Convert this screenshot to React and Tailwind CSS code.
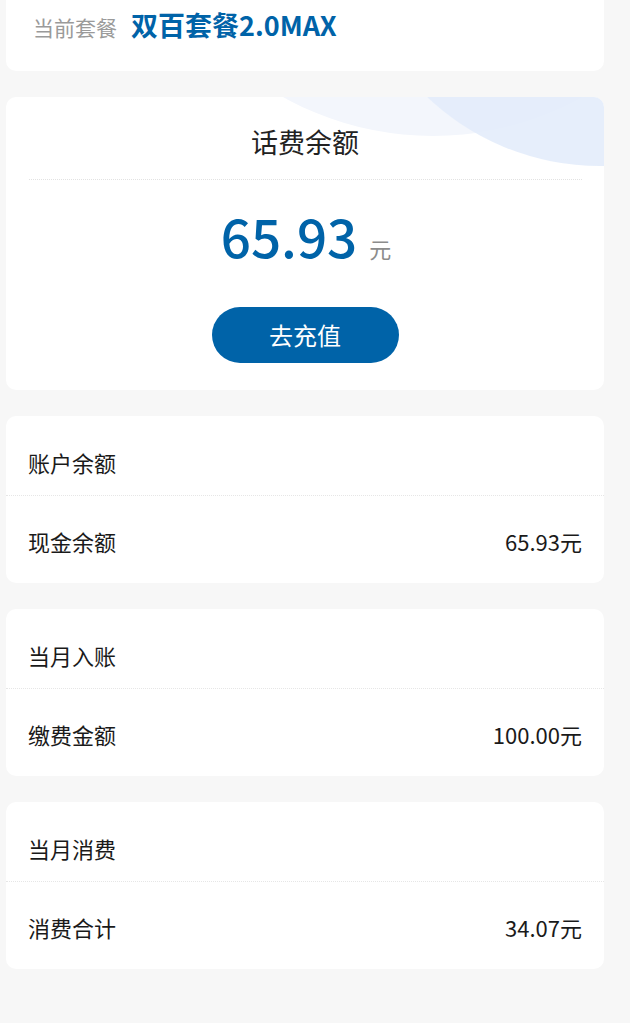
import React from "react";

const font = "font-['Noto_Sans_CJK_SC','Noto_Sans',sans-serif]";

const sections = [
  { title: "账户余额", label: "现金余额", value: "65.93元" },
  { title: "当月入账", label: "缴费金额", value: "100.00元" },
  { title: "当月消费", label: "消费合计", value: "34.07元" },
];

// One white block: section header, dotted rule, then label / amount row.
function InfoCard({ title, label, value }) {
  return (
    <div className="h-[167px] rounded-[10px] bg-white">
      <div className="h-[80px] border-b border-dotted border-[#e6e6e6] px-[22px] pt-[30px] text-[22px] leading-[32px] text-[#1a1a1a]">
        {title}
      </div>
      <div className="flex h-[87px] justify-between px-[22px] pt-[29px] text-[22px] leading-[32px] text-[#1a1a1a]">
        <span>{label}</span>
        <span>{value}</span>
      </div>
    </div>
  );
}

export default function App() {
  return (
    <div className={`${font} min-h-[1023px] bg-[#f7f7f7] pl-[6px] pr-[26px]`}>
      <div className="flex flex-col gap-[26px]">
        {/* current plan */}
        <div className="h-[71px] rounded-b-[10px] bg-white">
          <div className="flex h-[50px] items-center pl-[27px]">
            <div className="flex items-baseline gap-[14px]">
              <span className="text-[21px] text-[#9a9a9a]">当前套餐</span>
              <span className="text-[27px] font-bold text-[#0063a8]">双百套餐2.0MAX</span>
            </div>
          </div>
        </div>

        {/* phone balance */}
        <div className="relative h-[293px] overflow-hidden rounded-[10px] bg-white">
          <div className="pointer-events-none absolute left-[119px] top-[-577px] h-[616px] w-[616px] rounded-full bg-[#f3f6fc]" />
          <div className="pointer-events-none absolute left-[343px] top-[-433px] h-[502px] w-[502px] rounded-full bg-[#e3ecfb]/90" />
          <div className="relative flex flex-col items-center">
            <div className="pt-[27px] text-[27px] leading-[36px] text-[#222]">话费余额</div>
            <div className="mt-[19px] w-[553px] border-t border-dotted border-[#e2e2e2]" />
            <div className="mt-[25px] flex items-baseline gap-[12px] pl-[2px]">
              <span className="text-[53px] font-medium leading-[60px] text-[#0063a8]">65.93</span>
              <span className="text-[22px] text-[#8c8c8c]">元</span>
            </div>
            <button className="mt-[42px] h-[56px] w-[187px] rounded-full bg-[#0063a8] text-[24px] text-white">
              去充值
            </button>
          </div>
        </div>

        {sections.map((s) => (
          <InfoCard key={s.title} {...s} />
        ))}
      </div>
    </div>
  );
}
